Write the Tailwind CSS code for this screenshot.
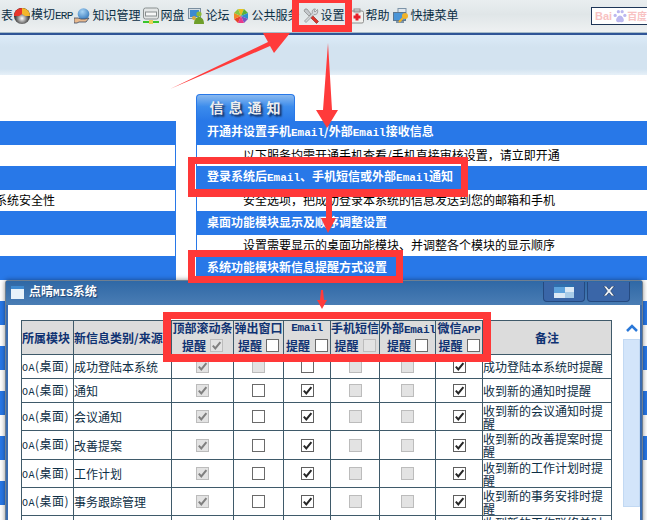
<!DOCTYPE html>
<html lang="zh">
<head>
<meta charset="utf-8">
<script src="https://cdn.jsdelivr.net/npm/@tailwindcss/browser@4"></script>
<title>点晴MIS系统</title>
</head>
<body class="m-0 bg-white">
<svg width="0" height="0" class="absolute">
  <defs>
    <symbol id="on" viewBox="0 0 13 13"><rect x=".5" y=".5" width="12" height="12" fill="#fff" stroke="#5f5f5f"/><path d="M2.8 6.600 5.300 9.400 10.400 3.200" fill="none" stroke="#262626" stroke-width="2"/></symbol>
    <symbol id="off" viewBox="0 0 13 13"><rect x=".5" y=".5" width="12" height="12" fill="#fff" stroke="#6a6a6a"/></symbol>
    <symbol id="dc" viewBox="0 0 13 13"><rect x=".5" y=".5" width="12" height="12" fill="#e3e3e3" stroke="#bcbcbc"/><path d="M2.800 6.600 5.300 9.400 10.400 3.200" fill="none" stroke="#808080" stroke-width="2"/></symbol>
    <symbol id="dx" viewBox="0 0 13 13"><rect x=".5" y=".5" width="12" height="12" fill="#e3e3e3" stroke="#bcbcbc"/></symbol>
    <radialGradient id="sph" cx=".5" cy=".65" r=".6"><stop offset="0" stop-color="#fff"/><stop offset=".5" stop-color="#777"/><stop offset="1" stop-color="#000"/></radialGradient>
    <radialGradient id="glb" cx=".4" cy=".3" r=".8"><stop offset="0" stop-color="#a8d4f5"/><stop offset="1" stop-color="#2a6fb5"/></radialGradient>
  </defs>
</svg>

<div class="relative w-[647px] h-[520px] overflow-hidden text-[12px] leading-[13px] text-[#0d2e45] font-['Noto_Sans_CJK_SC',sans-serif]">

  <!-- top menu -->
  <div class="h-[32px] flex items-center pl-[1px] text-[#0b2f45] bg-[linear-gradient(#e9eef0,#e0e6e8_45%,#eef1f2)]">
    <span class="pb-[3px]">表</span>
    <svg class="ml-[1px]" width="16" height="16" viewBox="0 0 16 16"><circle cx="8" cy="8" r="8" fill="url(#sph)"/><path d="M0 8a8 8 0 0 1 8-8V6L5 8Z" fill="#e8352b"/><path d="M16 8A8 8 0 0 0 8 0V6L11 8Z" fill="#f4b62a"/></svg>
    <span class="ml-[1px] pb-[3px]">模切<span class="font-['Liberation_Mono',monospace] text-[11px] tracking-[-.8px]">ERP</span></span>
    <svg class="ml-[2px]" width="16" height="16" viewBox="0 0 16 16"><circle cx="9.500" cy="6" r="5.800" fill="url(#glb)"/><path d="M0 10h4l3 1h4l4-1-3 4H5l-2 1H0Z" fill="#e9b98d" stroke="#3a4a66" stroke-width=".8"/></svg>
    <span class="ml-[2px] pb-[3px]">知识管理</span>
    <svg class="ml-[3px]" width="16" height="18" viewBox="0 0 16 18"><rect x=".5" y="1" width="15" height="11" rx="2" fill="#e3e6e6" stroke="#8a9090"/><rect x="2.500" y="5" width="11" height="4" fill="#f6f7f7" stroke="#8a9090"/><rect x="0" y="14" width="16" height="2" fill="#39c52c"/><rect x="6" y="13" width="4" height="4" fill="#e8d05a"/></svg>
    <span class="ml-[1px] pb-[3px]">网盘</span>
    <svg class="ml-[4px]" width="16" height="16" viewBox="0 0 16 16"><rect x=".5" y=".5" width="12" height="10" fill="#d5dde3" stroke="#7b8fa0"/><rect x="2" y="2" width="9" height="7" fill="#3d8ad0"/><circle cx="11" cy="6" r="2.600" fill="#8dbb3c"/><path d="M6 16c0-5 2.500-7 5-7s5 2 5 7Z" fill="#6f9f2a"/><circle cx="6" cy="10" r="2" fill="#d8a93c"/></svg>
    <span class="ml-[1px] pb-[3px]">论坛</span>
    <svg class="ml-[4px]" width="16" height="16" viewBox="0 0 16 16"><path d="M8 8 5 1h6Z" fill="#e9c21f"/><path d="M8 8l3-7 4 4Z" fill="#58b23a"/><path d="M8 8l7-3v6Z" fill="#2e8fd0"/><path d="M8 8l7 3-4 4Z" fill="#7a55c0"/><path d="M8 8l3 7H5Z" fill="#e83a8c"/><path d="M8 8l-3 7-4-4Z" fill="#e8402b"/><path d="M8 8l-7 3V5Z" fill="#f08a24"/><path d="M8 8 1 5l4-4Z" fill="#8cc63f"/></svg>
    <span class="ml-[2px] pb-[3px]">公共服务</span>
    <svg class="ml-[3px]" width="16" height="16" viewBox="0 0 16 16"><path d="M2 1 4 1 8 6 6 8 1 3Z" fill="#c4c8cc" stroke="#777" stroke-width=".6"/><path d="M7 9 11 13 13.500 15.500 15.500 13.500 9 7Z" fill="#d9342b" stroke="#8c1f19" stroke-width=".6"/><path d="M14.500 1.500 12 4l-1-1 1.500-2C10 .5 8.500 3 9.500 5L1.500 13 3 14.500 11 6.500c2 .8 4.500-1 3.500-5Z" fill="#d4d8dc" stroke="#777" stroke-width=".6"/></svg>
    <span class="ml-[2px] pb-[3px]">设置</span>
    <svg class="ml-[5px]" width="15" height="16" viewBox="0 0 15 16"><rect x=".5" y="3" width="13" height="12" rx="1.500" fill="#f1f1ee" stroke="#8e8e8e"/><rect x="4" y="1" width="6" height="3" fill="none" stroke="#8e8e8e"/><path d="M5.500 5.500h3v2h2v3h-2v2h-3v-2h-2v-3h2Z" fill="#e5202a"/></svg>
    <span class="ml-[1px] pb-[3px]">帮助</span>
    <svg class="ml-[3px]" width="16" height="16" viewBox="0 0 16 16"><rect x="5" y=".5" width="8" height="7" fill="#dfe6ec" stroke="#7c93a8"/><rect x=".5" y="4.500" width="12" height="8" fill="#4a95d8" stroke="#5b7690"/><rect x="3" y="13" width="8" height="2" fill="#7c93a8"/><circle cx="12" cy="8" r="3" fill="#f0b32a"/><path d="M10 10 6 14" stroke="#f0b32a" stroke-width="2"/></svg>
    <span class="ml-[2px] pb-[3px]">快捷菜单</span>
    <div class="ml-auto w-[56px] h-[18px] border border-r-0 border-[#1d3557] bg-white flex items-center pl-[3px] text-[11px] font-bold text-[#f8c2c2] font-['Liberation_Sans','Noto_Sans_CJK_SC',sans-serif] shrink-0">
      <span>Bai</span>
      <svg class="ml-[1px] shrink-0" width="14" height="14" viewBox="0 0 13 13" fill="#bcb8f0"><circle cx="2" cy="6" r="1.500"/><circle cx="5" cy="2.500" r="1.500"/><circle cx="8.500" cy="2.500" r="1.500"/><circle cx="11" cy="6" r="1.500"/><path d="M6.500 6c-2 0-4 3-3.500 5s2.500 1 3.500 1 3 1 3.500-1-1.500-5-3.500-5Z"/></svg>
      <span class="text-[10px] whitespace-nowrap">百度</span>
    </div>
  </div>
  <div class="h-[1px] bg-[#a6bcc9]"></div>
  <div class="h-[2px] bg-[#2f5597]"></div>
  <div class="h-[40px] bg-[linear-gradient(#dcebf8,#d3e3f0_30%,#d3e3f0_85%,#e6f0f8)]"></div>

  <!-- page panels -->
  <div class="flex items-start mt-[19px]">
    <div class="w-[176px] mt-[27px] shrink-0 text-black">
      <div class="h-[24px] bg-[#2878e8]"></div>
      <div class="h-[21px] bg-white border-r border-[#2878e8]"></div>
      <div class="h-[24px] bg-[#2878e8]"></div>
      <div class="h-[21px] bg-white border-r border-[#2878e8] flex items-center pb-[3px]"><span class="ml-[-5px]">系统安全性</span></div>
      <div class="h-[24px] bg-[#2878e8]"></div>
      <div class="h-[21px] bg-white border-r border-[#2878e8]"></div>
      <div class="h-[24px] bg-[#2878e8]"></div>
      <div class="h-[21px] bg-white"></div>
      <div class="h-[24px] bg-[#2878e8]"></div>
      <div class="h-[21px] bg-white"></div>
      <div class="h-[24px] bg-[#2878e8]"></div>
      <div class="h-[21px] bg-white"></div>
      <div class="h-[24px] bg-[#2878e8]"></div>
      <div class="h-[21px] bg-white"></div>
      <div class="h-[24px] bg-[#2878e8]"></div>
      <div class="h-[21px] bg-white"></div>
      <div class="h-[24px] bg-[#2878e8]"></div>
    </div>
    <div class="ml-[20px] flex-1 min-w-0">
      <div class="w-[99px] h-[27px] rounded-t-[4px] border border-b-0 border-[#2878e8] bg-[linear-gradient(#8ab9ef,#3c8cec_45%,#2878e8)] flex items-center justify-center text-[14px] font-bold tracking-[5px] pl-[4px] pb-[2px] text-[#eeeeee] [text-shadow:2px_2px_2px_#10254f]">信息通知</div>
      <div class="border-l border-[#2878e8] text-black">
        <div class="h-[24px] bg-[#2878e8] flex items-center pl-[10px] pb-[3px] text-white font-bold"><span>开通并设置手机<span class="font-['Liberation_Mono',monospace] text-[11px]">Email</span>/外部<span class="font-['Liberation_Mono',monospace] text-[11px]">Email</span>接收信息</span></div>
        <div class="h-[21px] bg-white flex items-center pl-[46px] pb-[3px]">以下服务均需开通手机查看/手机直接审核设置，请立即开通</div>
        <div class="h-[24px] bg-[#2878e8] flex items-center pl-[10px] pb-[3px] text-white font-bold"><span>登录系统后<span class="font-['Liberation_Mono',monospace] text-[11px]">Email</span>、手机短信或外部<span class="font-['Liberation_Mono',monospace] text-[11px]">Email</span>通知</span></div>
        <div class="h-[21px] bg-white flex items-center pl-[46px] pb-[3px]">安全选项，把成功登录本系统的信息发送到您的邮箱和手机</div>
        <div class="h-[24px] bg-[#2878e8] flex items-center pl-[10px] pb-[3px] text-white font-bold">桌面功能模块显示及顺序调整设置</div>
        <div class="h-[21px] bg-white flex items-center pl-[46px] pb-[3px]">设置需要显示的桌面功能模块、并调整各个模块的显示顺序</div>
        <div class="h-[24px] bg-[#2878e8] flex items-center pl-[10px] pb-[3px] text-white font-bold">系统功能模块新信息提醒方式设置</div>
        <div class="h-[21px] bg-white"></div>
        <div class="h-[24px] bg-[#2878e8]"></div>
        <div class="h-[21px] bg-white"></div>
        <div class="h-[24px] bg-[#2878e8]"></div>
        <div class="h-[21px] bg-white"></div>
        <div class="h-[24px] bg-[#2878e8]"></div>
        <div class="h-[21px] bg-white"></div>
        <div class="h-[24px] bg-[#2878e8]"></div>
      </div>
    </div>
  </div>

  <!-- dialog window -->
  <div class="absolute left-[5px] top-[280px] w-[638px] h-[260px] rounded-t-[3px] border border-[#6f7f90] bg-[#3b6cb0] shadow-[0_0_5px_rgba(0,0,0,.45)] px-[2px]">
    <div class="h-[24px] bg-[linear-gradient(#2f68a6,#4a7db4)] flex items-center -mx-[2px] px-[5px] text-white font-bold [text-shadow:1px_1px_1px_#1d3f6e]">
      <svg class="mb-[2px]" width="13" height="13" viewBox="0 0 13 13"><rect width="13" height="13" fill="#e8f2fa"/><rect width="13" height="3" fill="#3f8ad0"/></svg>
      <span class="ml-[5px] pb-[3px]">点晴<span class="font-['Liberation_Mono',monospace] text-[11px]">MIS</span>系统</span>
      <div class="ml-auto mr-[7px] mb-[3px] flex gap-[2px]">
        <div class="w-[42px] h-[20px] rounded-b-[4px] border border-t-0 border-[#254a80] bg-[#3a66a8] flex items-center justify-center">
          <svg width="20" height="14" viewBox="0 0 20 14"><rect width="20" height="14" fill="#dce9f5"/><rect width="20" height="3" fill="#2f6fae"/><rect y="3" width="11" height="6" fill="#5ea2dc"/><rect x="11" y="8" width="9" height="6" fill="#a9cce8"/></svg>
        </div>
        <div class="w-[43px] h-[20px] rounded-b-[4px] border border-t-0 border-[#254a80] bg-[#3a66a8] flex items-center justify-center">
          <svg width="12" height="10" viewBox="0 0 11 9"><path d="M.5 0H3L5.500 2.800 8 0h2.500L7 4.500 10.500 9H8L5.500 6.200 3 9H.5L4 4.500Z" fill="#eef2f6" stroke="#13294b" stroke-width=".5"/></svg>
        </div>
      </div>
    </div>
    <div class="bg-white h-[232px] flex pl-[13px] pt-[15px]">
      <table class="w-[590px] h-fit table-fixed border-collapse border border-[#3f5a6a] shrink-0 [&_td]:border [&_td]:border-[#3f5a6a] [&_td]:p-0 [&_th]:border [&_th]:border-[#3f5a6a] [&_th]:p-0 [&_th]:bg-[#dcdcdc] [&_th]:text-[#0f3272] [&_th]:font-bold [&_th]:overflow-hidden">
        <colgroup><col class="w-[52px]"><col class="w-[98px]"><col class="w-[62px]"><col class="w-[50px]"><col class="w-[47px]"><col class="w-[49px]"><col class="w-[56px]"><col class="w-[47px]"><col class="w-[129px]"></colgroup>
        <tbody>
          <tr class="h-[34px]">
            <th class="text-left pl-[1px] pb-[3px] whitespace-nowrap">所属模块</th>
            <th class="text-left pl-[3px] pb-[3px] whitespace-nowrap">新信息类别/来源</th>
            <th><div class="h-[12px] leading-[12px] whitespace-nowrap">顶部滚动条</div><div class="mt-[5px] h-[15px] flex items-center justify-center gap-[4px]"><span class="pb-[1px]">提醒</span><svg class="-mt-[2px]" width="13" height="13"><use href="#dc"/></svg></div></th>
            <th><div class="h-[12px] leading-[12px] whitespace-nowrap">弹出窗口</div><div class="mt-[5px] h-[15px] flex items-center justify-center gap-[4px]"><span class="pb-[1px]">提醒</span><svg class="-mt-[2px]" width="13" height="13"><use href="#off"/></svg></div></th>
            <th><div class="h-[12px] leading-[12px] font-['Liberation_Mono',monospace] text-[11px] tracking-[-.3px]">Email</div><div class="mt-[5px] h-[15px] flex items-center justify-center gap-[5px]"><span class="pb-[1px]">提醒</span><svg class="-mt-[2px]" width="13" height="13"><use href="#off"/></svg></div></th>
            <th><div class="h-[12px] leading-[12px] whitespace-nowrap">手机短信</div><div class="mt-[5px] h-[15px] flex items-center justify-center gap-[4px]"><span class="pb-[1px]">提醒</span><svg class="-mt-[2px]" width="13" height="13"><use href="#dx"/></svg></div></th>
            <th><div class="h-[12px] leading-[12px] whitespace-nowrap">外部<span class="font-['Liberation_Mono',monospace] text-[11px] tracking-[-.3px]">Email</span></div><div class="mt-[5px] h-[15px] flex items-center justify-center gap-[4px]"><span class="pb-[1px]">提醒</span><svg class="-mt-[2px]" width="13" height="13"><use href="#off"/></svg></div></th>
            <th><div class="h-[12px] leading-[12px] whitespace-nowrap">微信<span class="font-['Liberation_Mono',monospace] text-[11px] tracking-[-.3px]">APP</span></div><div class="mt-[5px] h-[15px] flex items-center justify-center gap-[4px]"><span class="pb-[1px]">提醒</span><svg class="-mt-[2px]" width="13" height="13"><use href="#off"/></svg></div></th>
            <th class="pb-[3px]">备注</th>
          </tr>
          <tr class="h-[24px]"><td class="pl-[3px] whitespace-nowrap tracking-[.5px]"><span class="font-['Liberation_Mono',monospace] text-[10px]">OA</span>(桌面)</td><td>成功登陆本系统</td><td><svg class="mx-auto" width="13" height="13"><use href="#dc"/></svg></td><td><svg class="mx-auto" width="13" height="13"><use href="#dx"/></svg></td><td><svg class="mx-auto" width="13" height="13"><use href="#off"/></svg></td><td><svg class="mx-auto" width="13" height="13"><use href="#dx"/></svg></td><td><svg class="mx-auto" width="13" height="13"><use href="#dx"/></svg></td><td><svg class="mx-auto" width="13" height="13"><use href="#on"/></svg></td><td>成功登陆本系统时提醒</td></tr>
          <tr class="h-[24px]"><td class="pl-[3px] whitespace-nowrap tracking-[.5px]"><span class="font-['Liberation_Mono',monospace] text-[10px]">OA</span>(桌面)</td><td>通知</td><td><svg class="mx-auto" width="13" height="13"><use href="#dc"/></svg></td><td><svg class="mx-auto" width="13" height="13"><use href="#off"/></svg></td><td><svg class="mx-auto" width="13" height="13"><use href="#on"/></svg></td><td><svg class="mx-auto" width="13" height="13"><use href="#dx"/></svg></td><td><svg class="mx-auto" width="13" height="13"><use href="#dx"/></svg></td><td><svg class="mx-auto" width="13" height="13"><use href="#on"/></svg></td><td>收到新的通知时提醒</td></tr>
          <tr class="h-[28px]"><td class="pl-[3px] whitespace-nowrap tracking-[.5px]"><span class="font-['Liberation_Mono',monospace] text-[10px]">OA</span>(桌面)</td><td>会议通知</td><td><svg class="mx-auto" width="13" height="13"><use href="#dc"/></svg></td><td><svg class="mx-auto" width="13" height="13"><use href="#off"/></svg></td><td><svg class="mx-auto" width="13" height="13"><use href="#on"/></svg></td><td><svg class="mx-auto" width="13" height="13"><use href="#dx"/></svg></td><td><svg class="mx-auto" width="13" height="13"><use href="#dx"/></svg></td><td><svg class="mx-auto" width="13" height="13"><use href="#on"/></svg></td><td>收到新的会议通知时提醒</td></tr>
          <tr class="h-[29px]"><td class="pl-[3px] whitespace-nowrap tracking-[.5px]"><span class="font-['Liberation_Mono',monospace] text-[10px]">OA</span>(桌面)</td><td>改善提案</td><td><svg class="mx-auto" width="13" height="13"><use href="#dc"/></svg></td><td><svg class="mx-auto" width="13" height="13"><use href="#off"/></svg></td><td><svg class="mx-auto" width="13" height="13"><use href="#on"/></svg></td><td><svg class="mx-auto" width="13" height="13"><use href="#dx"/></svg></td><td><svg class="mx-auto" width="13" height="13"><use href="#dx"/></svg></td><td><svg class="mx-auto" width="13" height="13"><use href="#on"/></svg></td><td>收到新的改善提案时提醒</td></tr>
          <tr class="h-[28px]"><td class="pl-[3px] whitespace-nowrap tracking-[.5px]"><span class="font-['Liberation_Mono',monospace] text-[10px]">OA</span>(桌面)</td><td>工作计划</td><td><svg class="mx-auto" width="13" height="13"><use href="#dc"/></svg></td><td><svg class="mx-auto" width="13" height="13"><use href="#off"/></svg></td><td><svg class="mx-auto" width="13" height="13"><use href="#on"/></svg></td><td><svg class="mx-auto" width="13" height="13"><use href="#dx"/></svg></td><td><svg class="mx-auto" width="13" height="13"><use href="#dx"/></svg></td><td><svg class="mx-auto" width="13" height="13"><use href="#on"/></svg></td><td>收到新的工作计划时提醒</td></tr>
          <tr class="h-[28px]"><td class="pl-[3px] whitespace-nowrap tracking-[.5px]"><span class="font-['Liberation_Mono',monospace] text-[10px]">OA</span>(桌面)</td><td>事务跟踪管理</td><td><svg class="mx-auto" width="13" height="13"><use href="#dc"/></svg></td><td><svg class="mx-auto" width="13" height="13"><use href="#off"/></svg></td><td><svg class="mx-auto" width="13" height="13"><use href="#on"/></svg></td><td><svg class="mx-auto" width="13" height="13"><use href="#dx"/></svg></td><td><svg class="mx-auto" width="13" height="13"><use href="#dx"/></svg></td><td><svg class="mx-auto" width="13" height="13"><use href="#on"/></svg></td><td>收到新的事务安排时提醒</td></tr>
          <tr class="h-[28px]"><td></td><td></td><td></td><td></td><td></td><td></td><td></td><td></td><td class="align-top">收到新的工作联络单时提醒</td></tr>
        </tbody>
      </table>
      <div class="ml-[11px] w-[18px] shrink-0">
        <svg class="ml-[3px] mt-[4px]" width="12" height="8" viewBox="0 0 12 8"><path d="M1 7 6 2 11 7" fill="none" stroke="#2a78d8" stroke-width="2.500"/></svg>
        <div class="mt-[7px] h-[168px] w-[17px] bg-[#d3e5fa] border border-[#c2d9f3]"></div>
      </div>
    </div>
  </div>

  <!-- red annotation frames -->
  <div class="absolute left-[292px] top-0 w-[60px] h-[32px] border-[7px] border-t-[3px] border-[#ff3838]"></div>
  <div class="absolute left-[188px] top-[157px] w-[280px] h-[40px] border-[7px] border-b-[8px] border-[#ff3838]"></div>
  <div class="absolute left-[188px] top-[250px] w-[215px] h-[33px] border-[7px] border-[#ff3838]"></div>
  <div class="absolute left-[163px] top-[312px] w-[328px] h-[50px] border-[8px] border-t-[7px] border-[#ff3838]"></div>

  <!-- red arrows -->
  <svg class="absolute left-0 top-0" width="647" height="520" viewBox="0 0 647 520" fill="#ff3b3b">
    <path d="M170 89 268 42 263 33 290 33 274 53 270 46Z"/>
    <path d="M328 43 332 110 338 110 327 128 316 110 323 110Z"/>
    <path d="M326 197 332 197 332 218 336 218 328 233 321 218 326 218Z"/>
    <path d="M321 290 323 290 324 300 327 300 322 309 317 300 320 300Z"/>
  </svg>
</div>
</body>
</html>
